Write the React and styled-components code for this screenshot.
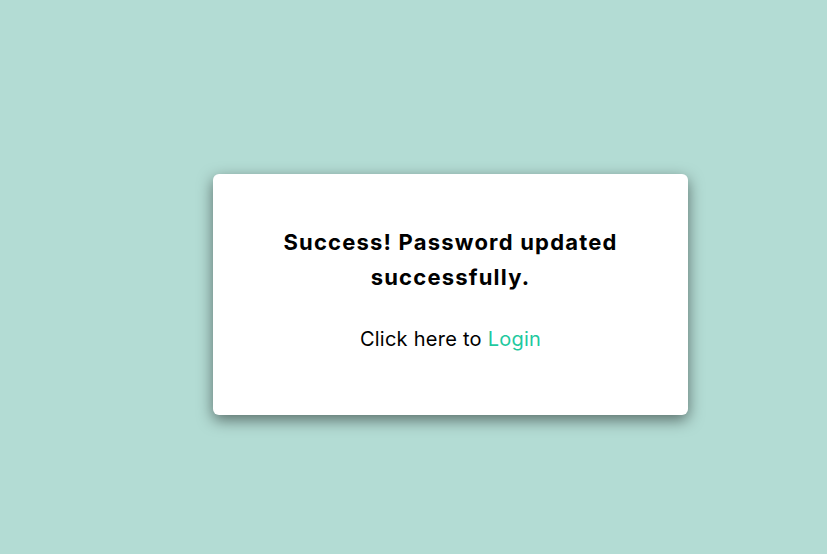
import styled, { createGlobalStyle } from "styled-components";

const GlobalStyle = createGlobalStyle`
  html, body {
    margin: 0;
    padding: 0;
    background: #b3dcd4;
  }
  body {
    font-family: "Inter", "Liberation Sans", sans-serif;
  }
`;

const Page = styled.div`
  min-height: 554px;
  box-sizing: border-box;
  padding: 174px 0 0 213px;
  display: flex;
  align-items: flex-start;
`;

const Card = styled.div`
  width: 475px;
  height: 241px;
  box-sizing: border-box;
  padding-top: 51px;
  background: #ffffff;
  border-radius: 6px;
  box-shadow: 0 5px 15px rgba(0, 0, 0, 0.5);
  display: flex;
  flex-direction: column;
  align-items: center;
`;

const Title = styled.h2`
  margin: 0;
  width: 420px;
  color: #000;
  font-size: 22px;
  font-weight: 700;
  letter-spacing: 1.2px;
  line-height: 35px;
  text-align: center;
`;

const Message = styled.p`
  margin: 29px 0 0;
  color: #000;
  font-size: 20px;
  font-weight: 400;
  letter-spacing: 0.25px;
  line-height: 30px;
  text-align: center;
`;

const LoginLink = styled.a`
  color: #1fc9a0;
  text-decoration: none;
  cursor: pointer;
`;

export default function App() {
  return (
    <>
      <GlobalStyle />
      <Page>
        <Card>
          <Title>Success! Password updated successfully.</Title>
          <Message>
            Click here to <LoginLink>Login</LoginLink>
          </Message>
        </Card>
      </Page>
    </>
  );
}
